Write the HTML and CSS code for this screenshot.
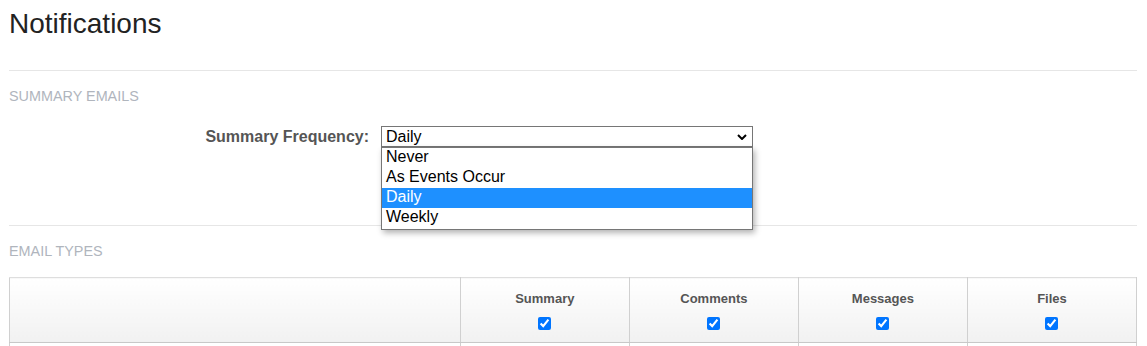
FILE: index.html
```html
<!DOCTYPE html>
<html lang="en">
<head>
    <meta charset="UTF-8">
    <meta name="viewport" content="width=device-width, initial-scale=1.0">
    <title>Notifications</title>
    <link rel="stylesheet" href="styles.css">
</head>
<body>
    <div class="page">
        <h1>Notifications</h1>

        <hr class="divider">
        <h3 class="section-title">Summary Emails</h3>

        <div class="form-row">
            <label class="form-label" for="summary-frequency">Summary Frequency:</label>
            <div class="select-wrap">
                <div class="select-box" id="summary-frequency">
                    <span>Daily</span>
                    <svg class="chevron" width="10" height="6" viewBox="0 0 10 6">
                        <polyline points="1,1 5,5 9,1" fill="none" stroke="#000" stroke-width="2"/>
                    </svg>
                </div>
                <ul class="select-list">
                    <li>Never</li>
                    <li>As Events Occur</li>
                    <li class="selected">Daily</li>
                    <li>Weekly</li>
                </ul>
            </div>
        </div>

        <hr class="divider divider-low">
        <h3 class="section-title">Email Types</h3>

        <table class="types-table">
            <colgroup>
                <col class="col-name">
                <col class="col-type">
                <col class="col-type">
                <col class="col-type">
                <col class="col-type">
            </colgroup>
            <thead>
                <tr>
                    <th></th>
                    <th>
                        <div class="th-label">Summary</div>
                        <input type="checkbox" checked>
                    </th>
                    <th>
                        <div class="th-label">Comments</div>
                        <input type="checkbox" checked>
                    </th>
                    <th>
                        <div class="th-label">Messages</div>
                        <input type="checkbox" checked>
                    </th>
                    <th>
                        <div class="th-label">Files</div>
                        <input type="checkbox" checked>
                    </th>
                </tr>
            </thead>
            <tbody>
                <tr>
                    <td></td>
                    <td></td>
                    <td></td>
                    <td></td>
                    <td></td>
                </tr>
            </tbody>
        </table>
    </div>
</body>
</html>
```

FILE: styles.css
```css
body {
    font-family: "Liberation Sans", Arial, sans-serif;
    margin: 0;
    padding: 0;
    background-color: #fff;
    color: #222;
}
.page {
    padding: 8px 10px 0 9px;
}
h1 {
    font-size: 28px;
    font-weight: normal;
    line-height: 32px;
    margin: 0;
    color: #222;
}
.divider {
    border: 0;
    border-top: 1px solid #e6e6e6;
    margin: 30px 0 0;
}
.divider-low {
    margin-top: 78px;
}
.section-title {
    font-size: 14.4px;
    font-weight: normal;
    line-height: 20px;
    text-transform: uppercase;
    color: #b0b5bd;
    margin: 15px 0 0;
}
.form-row {
    display: flex;
    margin-top: 20px;
}
.form-label {
    width: 360px;
    padding-right: 12px;
    text-align: right;
    font-size: 16px;
    font-weight: bold;
    line-height: 21px;
    color: #555;
}
.select-wrap {
    position: relative;
    width: 372px;
}
.select-box {
    display: flex;
    justify-content: space-between;
    align-items: center;
    height: 19px;
    line-height: 19px;
    padding: 0 4px 0 4px;
    border: 1px solid #767676;
    font-size: 16px;
    color: #000;
}
.chevron {
    margin-right: 1px;
}
.select-list {
    position: absolute;
    top: 100%;
    left: 0;
    right: 0;
    margin: 0;
    padding: 0 0 1px;
    list-style: none;
    background-color: #fff;
    border: 1px solid #767676;
    box-shadow: 2px 3px 6px rgba(0, 0, 0, 0.3);
    z-index: 10;
}
.select-list li {
    font-size: 16px;
    line-height: 18px;
    padding: 0 4px 2px;
    color: #000;
}
.select-list li.selected {
    background-color: #1e90ff;
    color: #fff;
}
.types-table {
    width: 100%;
    margin-top: 16px;
    border-collapse: collapse;
    table-layout: fixed;
}
.col-name {
    width: 40%;
}
.col-type {
    width: 15%;
}
.types-table th {
    padding: 12px 0;
    text-align: center;
    vertical-align: top;
    background: linear-gradient(#fff, #f1f1f1);
    border: 1px solid #d0d0d0;
    border-top-color: #dedede;
    border-bottom-color: #c8c8c8;
}
.th-label {
    font-size: 13px;
    font-weight: bold;
    line-height: 18px;
    color: #555;
}
.types-table th input {
    display: block;
    margin: 9px auto 0;
}
.types-table td {
    height: 40px;
    padding: 0;
    border: 1px solid #d0d0d0;
    border-top: 0;
}
```
